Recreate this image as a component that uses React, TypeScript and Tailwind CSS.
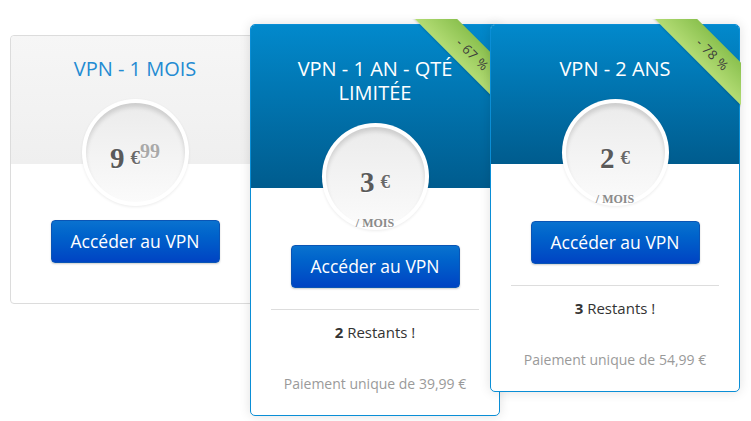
import React from "react";

interface Plan {
  title: string[];
  price: string;
  cents?: string;
  perMonth: boolean;
  featured: boolean;
  discount?: string;
  remaining?: number;
  total?: string;
}

const plans: Plan[] = [
  { title: ["VPN - 1 MOIS"], price: "9", cents: "99", perMonth: false, featured: false },
  {
    title: ["VPN - 1 AN - QTÉ", "LIMITÉE"],
    price: "3",
    perMonth: true,
    featured: true,
    discount: "- 67 %",
    remaining: 2,
    total: "39,99",
  },
  {
    title: ["VPN - 2 ANS"],
    price: "2",
    perMonth: true,
    featured: true,
    discount: "- 78 %",
    remaining: 3,
    total: "54,99",
  },
];

const Ribbon = ({ text }: { text: string }) => (
  <div className="absolute -top-1.5 -right-0.5 w-[100px] h-[100px] overflow-hidden pointer-events-none">
    <div className="absolute left-[-4px] top-[21px] w-[150px] h-[30px] rotate-45 bg-linear-to-b from-[#8bc14f] to-[#b3dc74] flex items-center justify-center shadow-[0_1px_2px_rgba(0,0,0,0.15)]">
      <span className="text-[13px] text-[#3b3b3b] tracking-[0.5px]">{text}</span>
    </div>
  </div>
);

const PriceCircle = ({ plan }: { plan: Plan }) => (
  <div className="relative z-10 mx-auto -mt-[65px] w-[107px] h-[107px] rounded-full bg-white p-[4px] shadow-[0_1px_3px_rgba(0,0,0,0.08)]">
    <div className="w-full h-full rounded-full bg-linear-to-b from-[#ebebeb] to-[#fbfbfb] shadow-[inset_0_4px_4px_rgba(0,0,0,0.13)] flex items-center justify-center pt-[10px]">
      <div className="flex items-start font-['Liberation_Serif',serif] font-bold text-[#5a5a5a] [text-shadow:0_1px_0_#fff]">
        <span className="text-[29px] leading-[30px]">{plan.price}</span>
        <span className="text-[19px] leading-[30px] ml-[6px] text-[#6a6a6a]">€</span>
        {plan.cents && (
          <span className="text-[20px] leading-[20px] text-[#a9a9a9] -mt-[2px]">{plan.cents}</span>
        )}
      </div>
    </div>
  </div>
);

const Card = ({ plan }: { plan: Plan }) => {
  const f = plan.featured;
  return (
    <section
      className={
        f
          ? "relative w-[250px] bg-white border border-[#0a8ed6] rounded-[5px] shadow-[0_0_12px_rgba(0,0,0,0.12)] -ml-[10px] pb-[21px]"
          : "relative w-[250px] mt-[11px] bg-white border border-[#dcdcdc] rounded-[4px] pb-[40px]"
      }
    >
      <div
        className={
          f
            ? "rounded-t-[4px] bg-linear-to-b from-[#0289cc] to-[#005c8e] pt-[32px]"
            : "rounded-t-[4px] bg-linear-to-b from-[#f6f6f6] to-[#efefef] pt-[21px]"
        }
      >
        {plan.title.map((line) => (
          <p
            key={line}
            className={
              f
                ? "text-center text-[20px] leading-[24px] text-white"
                : "text-center text-[20px] leading-[24px] text-[#238bd2]"
            }
          >
            {line}
          </p>
        ))}
        <div className="h-[18px]" />
        <div className="h-[65px]" />
      </div>
      {f && plan.discount && <Ribbon text={plan.discount} />}
      <PriceCircle plan={plan} />
      {plan.perMonth ? (
        <p className="relative z-20 -mt-[13px] h-[13px] text-center text-[12px] leading-[13px] font-bold font-['Liberation_Serif',serif] text-[#8a8a8a] [text-shadow:0_1px_0_#fff]">
          / MOIS
        </p>
      ) : null}
      <div className={plan.perMonth ? "flex justify-center mt-[15px]" : "flex justify-center mt-[14px]"}>
        <button className="w-[169px] h-[43px] rounded-[4px] bg-linear-to-b from-[#0a72cf] to-[#0043c3] border border-[#0a55b5] text-white text-[17.5px] shadow-[0_1px_2px_rgba(0,0,0,0.2)]">
          Accéder au VPN
        </button>
      </div>
      {plan.remaining !== undefined && (
        <>
          <div className="mx-[20px] mt-[21px] border-t border-[#dddddd]" />
          <p className="mt-[12px] text-center text-[15px] leading-[20px] text-[#333]">
            <span className="font-bold">{plan.remaining}</span> Restants !
          </p>
          <p className="mt-[32px] text-center text-[14px] leading-[20px] text-[#9a9a9a]">
            Paiement unique de {plan.total} €
          </p>
        </>
      )}
    </section>
  );
};

export default function App() {
  return (
    <div className="w-[751px] h-[421px] bg-white font-['Open_Sans',sans-serif] overflow-hidden">
      <div className="flex items-start pl-[10px] pt-[24px]">
        {plans.map((p) => (
          <Card key={p.title[0]} plan={p} />
        ))}
      </div>
    </div>
  );
}
